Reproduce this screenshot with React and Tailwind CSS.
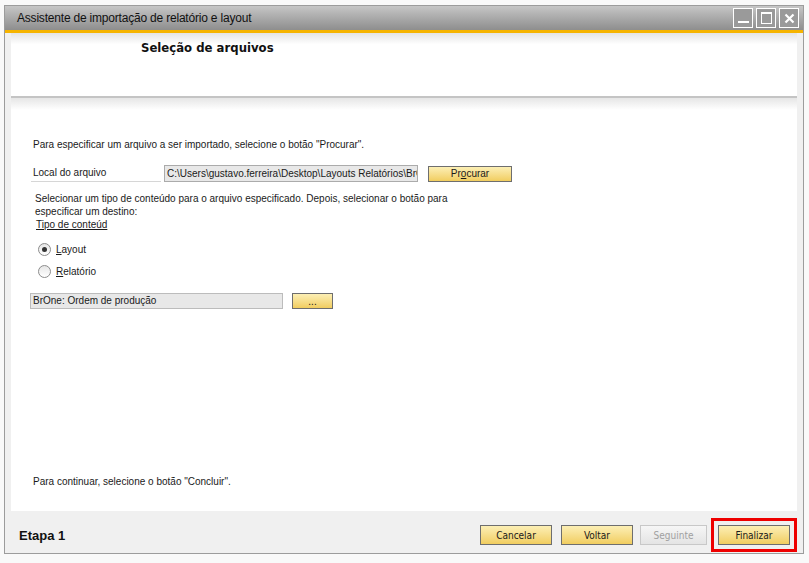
import React from "react";

const ui = { fontFamily: '"Liberation Sans", Arial, sans-serif' };
const narrow = { fontFamily: '"Liberation Sans Narrow", "DejaVu Sans Condensed", "Liberation Sans", sans-serif' };

function YellowButton({ children, className = "" }) {
  return (
    <button
      className={`flex items-center justify-center border border-[#6e6e6e] bg-gradient-to-b from-[#fcefb4] to-[#f1cd5e] text-[#1a1a1a] ${className}`}>
      {children}
    </button>
  );
}

function Radio({ checked, children }) {
  return (
    <label className="flex items-center gap-[5px] h-[14px]">
      <span className="w-[13px] h-[13px] rounded-full border border-[#8c8c8c] bg-gradient-to-b from-[#e6e6e6] to-white flex items-center justify-center">
        {checked && <span className="w-[5px] h-[5px] rounded-full bg-[#333]" />}
      </span>
      <span>{children}</span>
    </label>
  );
}

export default function App() {
  return (
    <div className="w-[809px] h-[563px] bg-[#f9f9f9] pt-[5px] pl-[4px]" style={ui}>
      <div className="w-[800px] h-[549px] border border-[#9c9c9c] bg-[#f0f0f0] flex flex-col">
        {/* Title bar */}
        <div className="h-[24px] bg-gradient-to-b from-[#c6c6c6] to-[#8e8e8e] flex items-center justify-between pl-[12px] pr-[4px]">
          <span className="text-[12px] tracking-[-0.2px] text-[#111]">
            Assistente de importação de relatório e layout
          </span>
          <div className="flex gap-[3px]">
            <div className="w-[20px] h-[20px] border border-white bg-[#9a9a9a] flex items-end justify-center pb-[4px]">
              <span className="w-[11px] h-[2px] bg-white" />
            </div>
            <div className="w-[20px] h-[20px] border border-white bg-[#9a9a9a] flex items-center justify-center">
              <span className="w-[11px] h-[12px] border border-white border-t-[2px]" />
            </div>
            <div className="w-[20px] h-[20px] border border-white bg-[#9a9a9a] flex items-center justify-center">
              <svg width="11" height="11" viewBox="0 0 11 11">
                <path d="M1.5 1.5 L9.5 9.5 M9.5 1.5 L1.5 9.5" stroke="white" strokeWidth="2.2" />
              </svg>
            </div>
          </div>
        </div>
        <div className="h-[3px] bg-[#f6b400]" />

        {/* Content */}
        <div className="flex-1 flex flex-col px-[6px]">
          <div className="flex-1 bg-white flex flex-col">
            {/* header */}
            <div className="h-[63px] bg-gradient-to-b from-[#e4e4e4] via-white via-[18%] to-white pl-[130px] pt-[2px]">
              <span className="text-[13px] font-bold text-[#111]" style={narrow}>
                Seleção de arquivos
              </span>
            </div>
            <div className="h-[2px] bg-[#c4c4c4]" />
            <div className="h-[12px] bg-gradient-to-b from-[#e6e6e6] to-white" />

            {/* body */}
            <div className="flex-1 flex flex-col pl-[22px] text-[10px] text-[#1a1a1a]">
              <div className="mt-[29px] h-[12px] leading-[12px]">
                Para especificar um arquivo a ser importado, selecione o botão "Procurar".
              </div>
              <div className="mt-[14px] flex items-center h-[17px]">
                <div className="w-[130px] -ml-[2px] pl-[2px] h-[17px] leading-[16px] border-b border-[#d6d6d6]">
                  Local do arquivo
                </div>
                <div className="ml-[3px] w-[254px] h-[17px] border border-[#ababab] bg-[#e8e8e8] pl-[2px] leading-[15px] overflow-hidden whitespace-nowrap">
                  C:\Users\gustavo.ferreira\Desktop\Layouts Relatórios\BrOne
                </div>
                <YellowButton className="ml-[10px] w-[84px] h-[16px] text-[10px]">
                  <span>
                    Pr<u>o</u>curar
                  </span>
                </YellowButton>
              </div>
              <div className="mt-[10px] pl-[2px] w-[440px] leading-[13px]">
                Selecionar um tipo de conteúdo para o arquivo especificado. Depois, selecionar o botão para especificar um destino:
              </div>
              <div className="pl-[3px] leading-[13px]">
                <span className="underline">Tipo de conteúd</span>
              </div>
              <div className="mt-[11px] pl-[5px] flex flex-col gap-[8px]">
                <Radio checked>
                  <u>L</u>ayout
                </Radio>
                <Radio>
                  <u>R</u>elatório
                </Radio>
              </div>
              <div className="mt-[15px] -ml-[3px] flex items-center">
                <div className="w-[253px] h-[16px] border border-[#bcbcbc] bg-[#e8e8e8] pl-[2px] leading-[14px]">
                  BrOne: Ordem de produção
                </div>
                <YellowButton className="ml-[9px] w-[41px] h-[16px] text-[10px]">...</YellowButton>
              </div>
              <div className="mt-auto mb-[23px] leading-[12px]">
                Para continuar, selecione o botão "Concluir".
              </div>
            </div>
          </div>

          {/* footer */}
          <div className="h-[42px] flex items-center justify-between pl-[8px] pr-[0px]">
            <span className="text-[13px] font-bold text-[#111] mt-[8px]">Etapa 1</span>
            <div className="flex items-center mt-[6px] text-[10px]" style={narrow}>
              <YellowButton className="w-[72px] h-[20px]">Cancelar</YellowButton>
              <YellowButton className="ml-[9px] w-[72px] h-[20px]">Voltar</YellowButton>
              <button className="ml-[7px] w-[67px] h-[20px] border border-[#c8c8c8] bg-gradient-to-b from-[#f6f6f6] to-[#e4e4e4] text-[#a0a0a0]">
                Seguinte
              </button>
              <div className="ml-[4px] border-[3px] border-[#ee0000] px-[4px] py-[4px]">
                <YellowButton className="w-[72px] h-[20px]">Finalizar</YellowButton>
              </div>
            </div>
          </div>
        </div>
      </div>
    </div>
  );
}
